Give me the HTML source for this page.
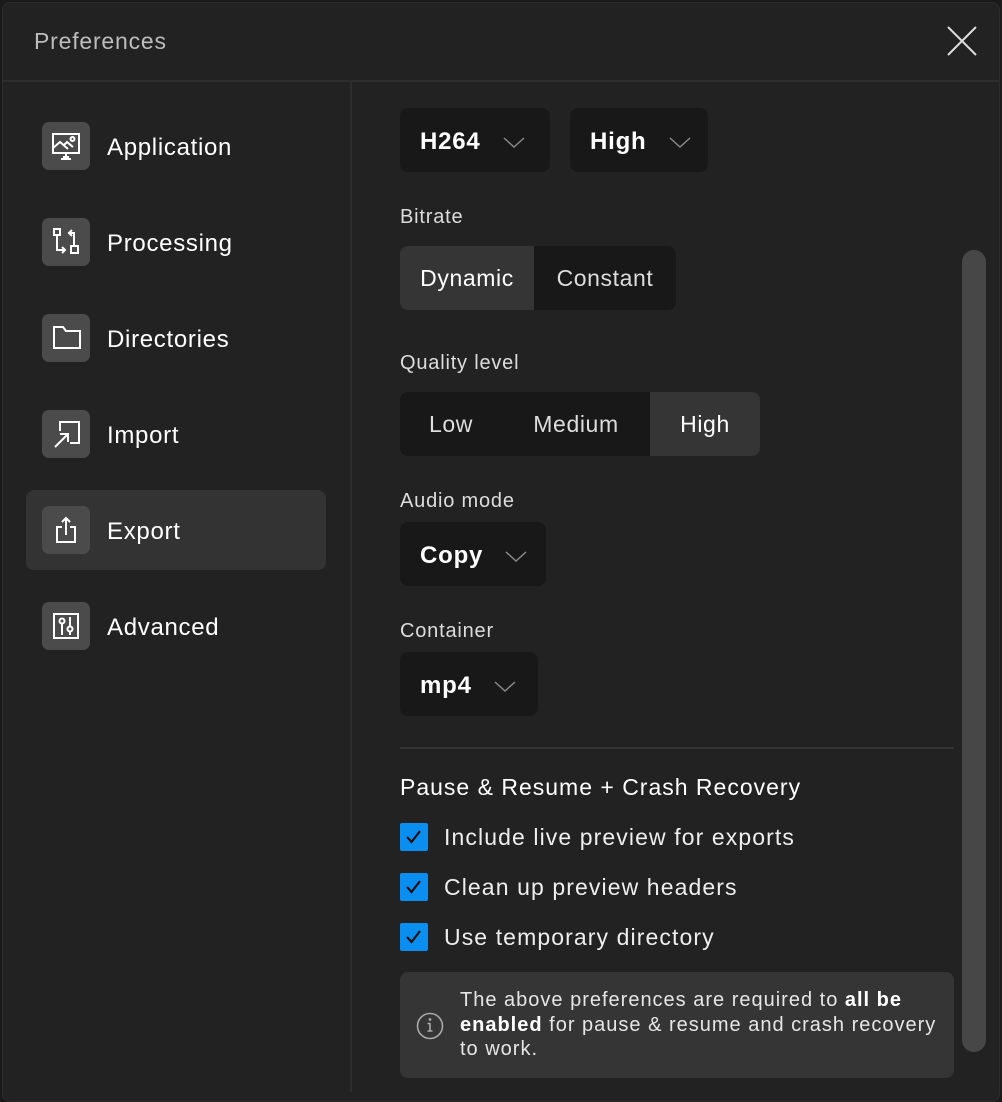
<!DOCTYPE html>
<html><head><meta charset="utf-8"><style>
*{box-sizing:border-box;margin:0;padding:0}
body{width:1002px;height:1090px;background:#1a1a1a;font-family:"Liberation Sans",sans-serif;color:#fff;overflow:hidden;position:relative}
.win{position:absolute;left:2px;top:2px;width:998px;height:1100px;background:#222;border:1px solid #2c2c2c;border-radius:8px}
.abs{position:absolute}
.title{left:34px;top:28px;font-size:23px;color:#bdbdbd;letter-spacing:0.8px}
.hline{left:2px;top:80px;width:998px;height:2px;background:#2d2d2d}
.vline{left:350px;top:82px;width:2px;height:1010px;background:#2d2d2d}
.nav{left:42px;width:290px;height:48px;display:flex;align-items:center;font-size:24px;letter-spacing:0.7px;color:#fff}
.nav span{position:relative;top:2px}
.ib{width:48px;height:48px;background:#4b4b4b;border-radius:7px;margin-right:17px;flex:none}
.ib svg{display:block}
.sel{left:26px;top:490px;width:300px;height:80px;background:#333;border-radius:8px}
.dd{background:#181818;border-radius:8px;height:64px;display:flex;align-items:center;padding:3px 0 0 20px;font-size:24px;letter-spacing:0.8px;font-weight:bold;color:#fff}
.dd svg{margin-left:22px}
.lbl{font-size:20px;letter-spacing:0.8px;color:#ddd}
.seg{background:#181818;border-radius:8px;height:64px;display:flex;font-size:23px;letter-spacing:0.6px;color:#ddd;overflow:hidden}
.seg div{display:flex;align-items:center;justify-content:center}
.seg .on{background:#353535;color:#fff}
.cb{left:400px;width:28px;height:28px;background:#0a8ff0;border-radius:2px}
.cbt{left:444px;font-size:23px;letter-spacing:1.1px;color:#eee}
</style></head><body>
<div class="win"></div>
<div class="abs title">Preferences</div>
<svg class="abs" style="left:946px;top:26px" width="32" height="30" viewBox="0 0 32 30"><path d="M2 1L30 29M30 1L2 29" stroke="#ddd" stroke-width="2"/></svg>
<div class="abs hline"></div>
<div class="abs vline"></div>
<div class="abs sel"></div>

<div class="abs nav" style="top:122px"><div class="ib"><svg width="48" height="48" viewBox="0 0 48 48" fill="none" stroke="#fff" stroke-width="2"><rect x="11" y="12" width="26" height="19"/><path d="M11 26l7-6 8 7M22 23l3-3 6 5M24 31v4M19 37h10M21 35h6"/><circle cx="30.5" cy="17" r="2"/></svg></div><span>Application</span></div>
<div class="abs nav" style="top:218px"><div class="ib"><svg width="48" height="48" viewBox="0 0 48 48" fill="none" stroke="#fff" stroke-width="2"><rect x="12" y="11" width="6" height="6"/><path d="M15 17v15h8M20 29l3 3-3 3"/><rect x="29" y="28" width="7" height="7"/><path d="M32 28V15h-5M30 12l-3 3 3 3"/></svg></div><span>Processing</span></div>
<div class="abs nav" style="top:314px"><div class="ib"><svg width="48" height="48" viewBox="0 0 48 48" fill="none" stroke="#fff" stroke-width="2"><path d="M12 13h9l3 4h14v17H12z"/></svg></div><span>Directories</span></div>
<div class="abs nav" style="top:410px"><div class="ib"><svg width="48" height="48" viewBox="0 0 48 48" fill="none" stroke="#fff" stroke-width="2"><path d="M18 21v-9h19v21h-9M13 37l13-13M18 24h8v8"/></svg></div><span>Import</span></div>
<div class="abs nav" style="top:506px"><div class="ib"><svg width="48" height="48" viewBox="0 0 48 48" fill="none" stroke="#fff" stroke-width="2"><path d="M20 21h-5v15h18V21h-5M24 12v17M20 16l4-4 4 4"/></svg></div><span>Export</span></div>
<div class="abs nav" style="top:602px"><div class="ib"><svg width="48" height="48" viewBox="0 0 48 48" fill="none" stroke="#fff" stroke-width="2"><rect x="12" y="12" width="24" height="24"/><circle cx="20" cy="19" r="2.5"/><path d="M20 22v11M28 15v9M28 30v3"/><circle cx="28" cy="27" r="2.5"/></svg></div><span>Advanced</span></div>

<div class="abs dd" style="left:400px;top:108px;width:150px">H264<svg width="22" height="14" viewBox="0 0 22 14"><path d="M1 3l10 9 10-9" stroke="#888" stroke-width="1.5" fill="none"/></svg></div>
<div class="abs dd" style="left:570px;top:108px;width:138px">High<svg width="22" height="14" viewBox="0 0 22 14"><path d="M1 3l10 9 10-9" stroke="#888" stroke-width="1.5" fill="none"/></svg></div>

<div class="abs lbl" style="left:400px;top:206px">Bitrate</div>
<div class="abs seg" style="left:400px;top:246px;width:276px"><div class="on" style="width:134px">Dynamic</div><div style="width:142px">Constant</div></div>

<div class="abs lbl" style="left:400px;top:352px">Quality level</div>
<div class="abs seg" style="left:400px;top:392px;width:360px"><div style="width:102px">Low</div><div style="width:148px">Medium</div><div class="on" style="width:110px">High</div></div>

<div class="abs lbl" style="left:400px;top:490px">Audio mode</div>
<div class="abs dd" style="left:400px;top:522px;width:146px">Copy<svg width="22" height="14" viewBox="0 0 22 14"><path d="M1 3l10 9 10-9" stroke="#888" stroke-width="1.5" fill="none"/></svg></div>

<div class="abs lbl" style="left:400px;top:620px">Container</div>
<div class="abs dd" style="left:400px;top:652px;width:138px">mp4<svg width="22" height="14" viewBox="0 0 22 14"><path d="M1 3l10 9 10-9" stroke="#888" stroke-width="1.5" fill="none"/></svg></div>

<div class="abs" style="left:400px;top:747px;width:554px;height:2px;background:#333"></div>
<div class="abs" style="left:400px;top:774px;font-size:23px;letter-spacing:1px;color:#fff">Pause &amp; Resume + Crash Recovery</div>

<div class="abs cb" style="top:823px"><svg width="28" height="28" viewBox="0 0 28 28"><path d="M7 14l4.5 5L20 8" stroke="#111" stroke-width="2.2" fill="none"/></svg></div>
<div class="abs cbt" style="top:824px">Include live preview for exports</div>
<div class="abs cb" style="top:873px"><svg width="28" height="28" viewBox="0 0 28 28"><path d="M7 14l4.5 5L20 8" stroke="#111" stroke-width="2.2" fill="none"/></svg></div>
<div class="abs cbt" style="top:874px">Clean up preview headers</div>
<div class="abs cb" style="top:923px"><svg width="28" height="28" viewBox="0 0 28 28"><path d="M7 14l4.5 5L20 8" stroke="#111" stroke-width="2.2" fill="none"/></svg></div>
<div class="abs cbt" style="top:924px">Use temporary directory</div>

<div class="abs" style="left:400px;top:972px;width:554px;height:106px;background:#353535;border-radius:8px"></div>
<svg class="abs" style="left:415px;top:1011px" width="30" height="30" viewBox="0 0 30 30" fill="none" stroke="#aaa" stroke-width="1.6"><circle cx="15" cy="15" r="12.5"/><path d="M15 12v8M12.5 20h5M12.5 12.5h2.5"/><circle cx="15" cy="8.5" r=".6" fill="#aaa"/></svg>
<div class="abs" style="left:460px;top:988px;width:485px;font-size:20px;letter-spacing:1px;line-height:24.5px;color:#e6e6e6">The above preferences are required to <b style="color:#fff">all be enabled</b> for pause &amp; resume and crash recovery to work.</div>

<div class="abs" style="left:962px;top:250px;width:24px;height:802px;background:#474747;border-radius:12px"></div>
</body></html>
